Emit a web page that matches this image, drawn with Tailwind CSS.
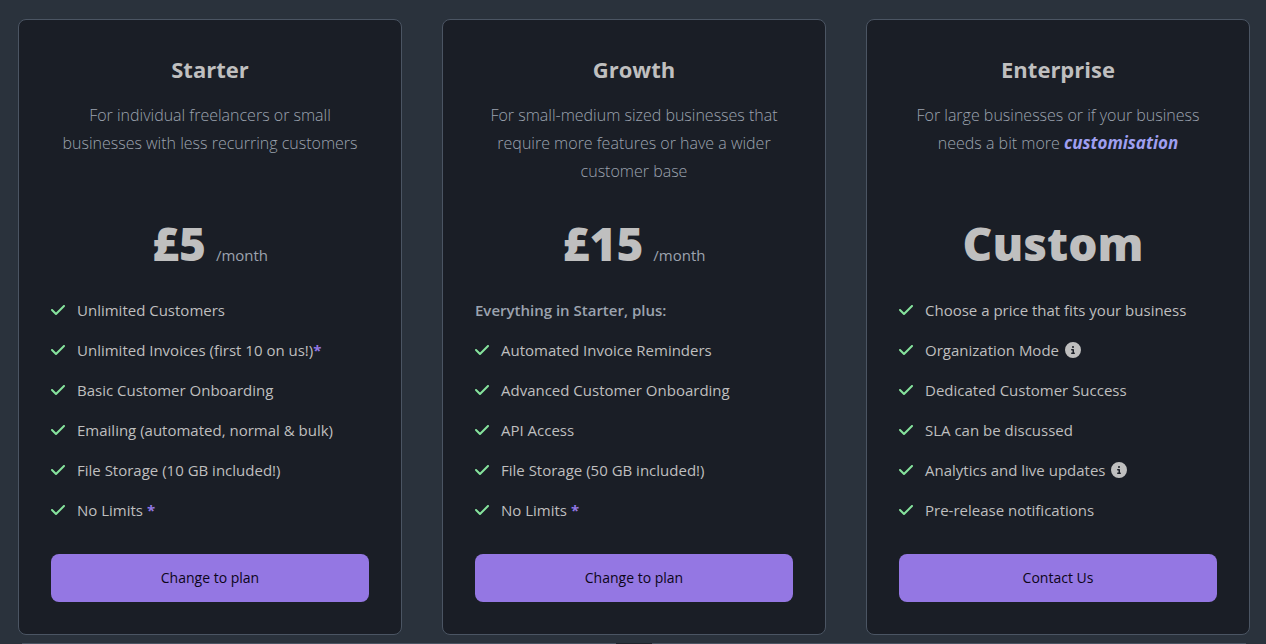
<!DOCTYPE html>
<html lang="en">
<head>
<meta charset="utf-8">
<meta name="viewport" content="width=device-width, initial-scale=1">
<title>Plans</title>
<script src="https://cdn.jsdelivr.net/npm/@tailwindcss/browser@4"></script>
</head>
<body class="bg-[#2a323c] pl-[18px] pr-4 pt-[19px] font-['Open_Sans','Noto_Sans',sans-serif] text-[15px] leading-6 text-[#bfbfbf]">
<svg class="hidden" aria-hidden="true">
  <symbol id="check" viewBox="0 0 448 512"><path fill="currentColor" d="M438.600 105.400c12.500 12.500 12.500 32.800 0 45.300l-256 256c-12.500 12.500-32.800 12.500-45.300 0l-128-128c-12.500-12.500-12.500-32.800 0-45.300s32.800-12.500 45.300 0L160 338.700 393.400 105.400c12.500-12.500 32.800-12.500 45.300 0z"/></symbol>
  <symbol id="info" viewBox="0 0 512 512"><path fill="currentColor" d="M256 512A256 256 0 1 0 256 0a256 256 0 1 0 0 512zM216 336h24V272H216c-13.300 0-24-10.700-24-24s10.700-24 24-24h48c13.300 0 24 10.700 24 24v88h8c13.300 0 24 10.700 24 24s-10.700 24-24 24H216c-13.300 0-24-10.700-24-24s10.700-24 24-24zm40-208a32 32 0 1 1 0 64 32 32 0 1 1 0-64z"/></symbol>
</svg>
<main class="grid grid-cols-3 gap-10">
  <section class="flex flex-col rounded-lg border border-[#4b5563] bg-[#1a1e26] p-8 text-center">
    <h2 class="mt-px mb-4 text-[22px] leading-8 font-bold">Starter</h2>
    <p class="h-[84px] px-2 text-base leading-7 font-light text-[#9ca3af]">For individual freelancers or small businesses with less recurring customers</p>
    <div class="mt-[34px] mb-[31px] flex h-12 items-baseline justify-center"><span class="mr-2.5 text-[46px] leading-12 font-extrabold">£5</span><span class="text-[#9ca3af]">/month</span></div>
    <ul class="mb-8 space-y-4 text-left">
      <li class="flex items-center gap-3"><svg class="h-4 w-3.5 text-[#86e39d]"><use href="#check"/></svg><span>Unlimited Customers</span></li>
      <li class="flex items-center gap-3"><svg class="h-4 w-3.5 text-[#86e39d]"><use href="#check"/></svg><span>Unlimited Invoices (first 10 on us!)<b class="text-[#9177e3]">*</b></span></li>
      <li class="flex items-center gap-3"><svg class="h-4 w-3.5 text-[#86e39d]"><use href="#check"/></svg><span>Basic Customer Onboarding</span></li>
      <li class="flex items-center gap-3"><svg class="h-4 w-3.5 text-[#86e39d]"><use href="#check"/></svg><span>Emailing (automated, normal &amp; bulk)</span></li>
      <li class="flex items-center gap-3"><svg class="h-4 w-3.5 text-[#86e39d]"><use href="#check"/></svg><span>File Storage (10 GB included!)</span></li>
      <li class="flex items-center gap-3"><svg class="h-4 w-3.5 text-[#86e39d]"><use href="#check"/></svg><span>No Limits <b class="text-[#9177e3]">*</b></span></li>
    </ul>
    <button type="button" class="h-12 rounded-lg bg-[#9477e3] text-sm font-medium text-[#0c0619]">Change to plan</button>
  </section>
  <section class="flex flex-col rounded-lg border border-[#4b5563] bg-[#1a1e26] p-8 text-center">
    <h2 class="mt-px mb-4 text-[22px] leading-8 font-bold">Growth</h2>
    <p class="h-[84px] px-2 text-base leading-7 font-light text-[#9ca3af]">For small-medium sized businesses that require more features or have a wider customer base</p>
    <div class="mt-[34px] mb-[31px] flex h-12 items-baseline justify-center"><span class="mr-2.5 text-[46px] leading-12 font-extrabold">£15</span><span class="text-[#9ca3af]">/month</span></div>
    <ul class="mb-8 space-y-4 text-left">
      <li class="font-semibold text-[#9ca3af]">Everything in Starter, plus:</li>
      <li class="flex items-center gap-3"><svg class="h-4 w-3.5 text-[#86e39d]"><use href="#check"/></svg><span>Automated Invoice Reminders</span></li>
      <li class="flex items-center gap-3"><svg class="h-4 w-3.5 text-[#86e39d]"><use href="#check"/></svg><span>Advanced Customer Onboarding</span></li>
      <li class="flex items-center gap-3"><svg class="h-4 w-3.5 text-[#86e39d]"><use href="#check"/></svg><span>API Access</span></li>
      <li class="flex items-center gap-3"><svg class="h-4 w-3.5 text-[#86e39d]"><use href="#check"/></svg><span>File Storage (50 GB included!)</span></li>
      <li class="flex items-center gap-3"><svg class="h-4 w-3.5 text-[#86e39d]"><use href="#check"/></svg><span>No Limits <b class="text-[#9177e3]">*</b></span></li>
    </ul>
    <button type="button" class="h-12 rounded-lg bg-[#9477e3] text-sm font-medium text-[#0c0619]">Change to plan</button>
  </section>
  <section class="flex flex-col rounded-lg border border-[#4b5563] bg-[#1a1e26] p-8 text-center">
    <h2 class="mt-px mb-4 text-[22px] leading-8 font-bold">Enterprise</h2>
    <p class="h-[84px] px-2 text-base leading-7 font-light text-[#9ca3af]">For large businesses or if your business needs a bit more <em class="text-[17px] font-bold text-[#9f9ff0]">customisation</em></p>
    <div class="mt-[34px] mb-[31px] flex h-12 items-baseline justify-center"><span class="mr-2.5 text-[46px] leading-12 font-extrabold">Custom</span></div>
    <ul class="mb-8 space-y-4 text-left">
      <li class="flex items-center gap-3"><svg class="h-4 w-3.5 text-[#86e39d]"><use href="#check"/></svg><span>Choose a price that fits your business</span></li>
      <li class="flex items-center gap-3"><svg class="h-4 w-3.5 text-[#86e39d]"><use href="#check"/></svg><span class="flex items-center gap-1.5">Organization Mode <svg class="size-4"><use href="#info"/></svg></span></li>
      <li class="flex items-center gap-3"><svg class="h-4 w-3.5 text-[#86e39d]"><use href="#check"/></svg><span>Dedicated Customer Success</span></li>
      <li class="flex items-center gap-3"><svg class="h-4 w-3.5 text-[#86e39d]"><use href="#check"/></svg><span>SLA can be discussed</span></li>
      <li class="flex items-center gap-3"><svg class="h-4 w-3.5 text-[#86e39d]"><use href="#check"/></svg><span class="flex items-center gap-1.5">Analytics and live updates <svg class="size-4"><use href="#info"/></svg></span></li>
      <li class="flex items-center gap-3"><svg class="h-4 w-3.5 text-[#86e39d]"><use href="#check"/></svg><span>Pre-release notifications</span></li>
    </ul>
    <button type="button" class="h-12 rounded-lg bg-[#9477e3] text-sm font-medium text-[#0c0619]">Contact Us</button>
  </section>
</main>
<div class="mx-1 mt-2 flex h-px justify-center bg-[#4b5563]"><span class="w-9 bg-[#1f242d]"></span></div>
</body>
</html>
